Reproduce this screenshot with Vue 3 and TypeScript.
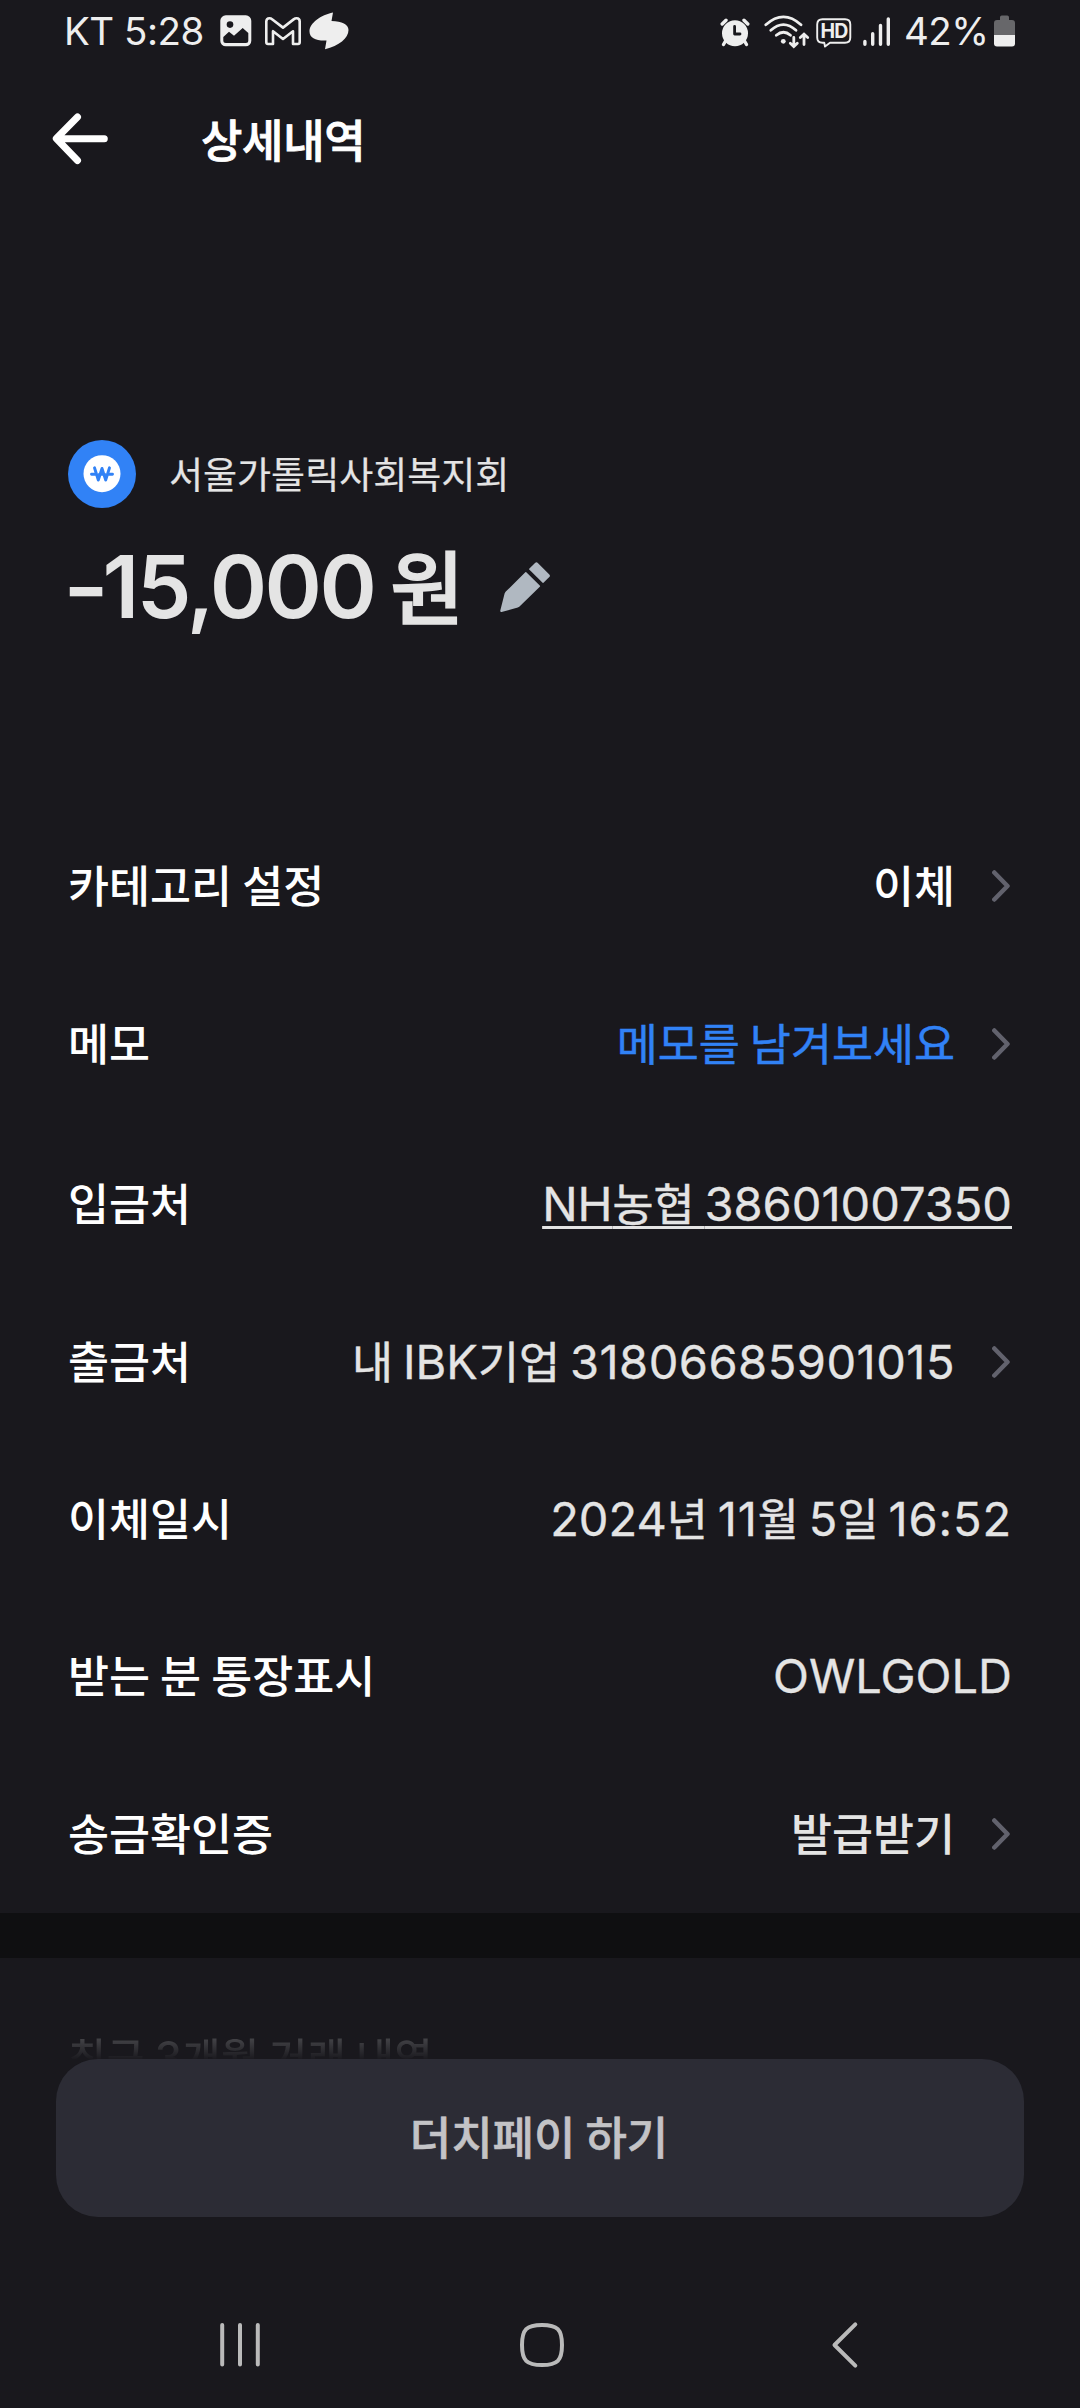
<script setup lang="ts">
interface Row {
  label: string
  value: string
  height: number
  tone?: 'strong' | 'link' | 'plain' | 'medium'
  tracking?: number
  underline?: boolean
  chevron?: boolean
}

interface Run {
  text: string
  latin: boolean
}

const rows: Row[] = [
  { label: '카테고리 설정', value: '이체', height: 158, tone: 'strong', chevron: true },
  { label: '메모', value: '메모를 남겨보세요', height: 160, tone: 'link', chevron: true },
  { label: '입금처', value: 'NH농협 38601007350', height: 158, underline: true },
  { label: '출금처', value: '내 IBK기업 31806685901015', height: 157, tracking: 0.5, chevron: true },
  { label: '이체일시', value: '2024년 11월 5일 16:52', height: 157, tracking: 0.9 },
  { label: '받는 분 통장표시', value: 'OWLGOLD', height: 158 },
  { label: '송금확인증', value: '발급받기', height: 158, tone: 'medium', chevron: true },
]

// Splits a string into Latin/digit runs and Hangul runs, so each gets its own face.
function runs(text: string): Run[] {
  return (text.match(/[\x21-\x7e]+|[^\x21-\x7e]+/g) ?? []).map((t) => ({
    text: t,
    latin: /^[\x21-\x7e]/.test(t),
  }))
}

function spacing(row: Row, run: Run): string {
  return run.text.includes('1') ? `${row.tracking ?? 0}px` : '0px'
}
</script>

<template>
  <div class="screen">
    <div class="status">
      <span class="status-text carrier">KT 5:28</span>
      <svg class="ic-photo" width="32" height="32" viewBox="0 0 32 32">
        <rect x="0.3" y="0.3" width="31" height="31" rx="5.5" fill="#eee" />
        <circle cx="10" cy="9.6" r="3.3" fill="#19181d" />
        <path d="M3.3 22 L9 16.7 L14 20.8 L22.7 13 L28.3 18 V25.5 Q28.3 28 25.8 28 H5.8 Q3.3 28 3.3 25.5 Z" fill="#19181d" />
      </svg>
      <svg class="ic-mail" width="36" height="29" viewBox="0 0 36 29">
        <path d="M1.3 4.5 Q1.3 1.3 4.4 1.3 Q6 1.3 7.4 2.4 L18 10.6 L28.6 2.4 Q30 1.3 31.6 1.3 Q34.7 1.3 34.7 4.5 V25.3 Q34.7 27 33 27 H28 V14.2 L18 22 L8 14.2 V27 H3 Q1.3 27 1.3 25.3 Z" fill="none" stroke="#eee" stroke-width="2.6" stroke-linejoin="round" />
      </svg>
      <svg class="ic-blob" width="40" height="38" viewBox="0 0 40 38">
        <path d="M24 0.5 C12 3 0.5 11 0.5 19.5 C0.5 26 7 29 17.5 28.5 L16 37.3 C30 34 39.5 26 39.5 18 C39.5 12.5 33 9 22.5 9 Z" fill="#eee" />
      </svg>
      <span class="grow"></span>
      <svg class="ic-alarm" width="30" height="29" viewBox="0 0 30 29">
        <g stroke="#eee" stroke-width="3.4" stroke-linecap="round" fill="none">
          <path d="M2.2 6 L6 2.3 M27.8 6 L24 2.3" />
          <path d="M5.5 23 L3.5 26.5 M24.5 23 L26.5 26.5" />
        </g>
        <circle cx="15" cy="15.3" r="13" fill="#eee" />
        <path d="M14.6 8.5 V16 H20" fill="none" stroke="#19181d" stroke-width="2.8" stroke-linecap="round" stroke-linejoin="round" />
      </svg>
      <svg class="ic-wifi" width="46" height="34" viewBox="0 0 46 34">
        <g fill="none" stroke="#eee" stroke-width="2.8" stroke-linecap="round">
          <path d="M1.8 9.8 Q19.5 -6 37 9.8" />
          <path d="M6.8 15.3 Q19.5 4 32 15.3" />
          <path d="M12.3 20.3 Q19.5 14.2 26.5 20.3" />
          <path d="M29.8 22.5 V31 M26.3 28.3 L29.8 31.6 L33.3 28.3" />
          <path d="M40 29.5 V19.5 M36.3 22.6 L40 19.1 L43.7 22.6" />
        </g>
        <circle cx="19.3" cy="26.3" r="2.4" fill="#eee" />
      </svg>
      <span class="hd">
        <svg width="36" height="30" viewBox="0 0 36 30">
          <path d="M6.5 1.2 H29 Q34.3 1.2 34.3 6.5 V19.5 Q34.3 24.8 29 24.8 H14 L9 28.6 L8.3 24.8 H6.5 Q1.2 24.8 1.2 19.5 V6.5 Q1.2 1.2 6.5 1.2 Z" fill="none" stroke="#eee" stroke-width="1.9" stroke-linejoin="round" />
        </svg>
        <b>HD</b>
      </span>
      <svg class="ic-signal" width="28" height="30" viewBox="0 0 28 30">
        <g stroke="#eee" stroke-width="3.4" stroke-linecap="round">
          <path d="M1.9 24.5 V27.3 M9.7 16.8 V27.3 M17.5 8.5 V27.3 M25.3 2 V27.3" />
        </g>
      </svg>
      <span class="status-text pct">42%</span>
      <svg class="ic-batt" width="21" height="32" viewBox="0 0 21 32">
        <path d="M6 5 V2.3 Q6 0.5 7.8 0.5 H13.2 Q15 0.5 15 2.3 V5 H18 Q21 5 21 8 V20 H0 V8 Q0 5 3 5 Z" fill="#67676a" />
        <path d="M0 20 H21 V28.5 Q21 31.5 18 31.5 H3 Q0 31.5 0 28.5 Z" fill="#eee" />
      </svg>
    </div>

    <header class="header">
      <svg width="56" height="52" viewBox="0 0 56 52" fill="none" stroke="#fff" stroke-width="7" stroke-linecap="round" stroke-linejoin="round">
        <path d="M25.5 4 L4.3 25.5 L25.5 47.5 M5 25.7 H52.3" />
      </svg>
      <h1>상세내역</h1>
    </header>

    <section class="summary">
      <div class="party">
        <svg width="68" height="68" viewBox="0 0 68 68">
          <circle cx="34" cy="34" r="34" fill="#3182f6" />
          <circle cx="34" cy="33.7" r="18.5" fill="#fff" />
          <path d="M26.5 27.8 L30.3 40 L34 28.5 L37.7 40 L41.5 27.8 M23.5 34.3 H28 M31.5 34.3 H36.5 M40 34.3 H44.5" fill="none" stroke="#3182f6" stroke-width="2.9" stroke-linecap="round" stroke-linejoin="round" />
        </svg>
        <span>서울가톨릭사회복지회</span>
      </div>
      <div class="amount">
        <span class="num"><i class="minus">-</i>15,000</span><span class="won">원</span>
        <svg width="51" height="51" viewBox="0 0 51 51" fill="#b0b8c1">
          <path d="M26.3 10.2 L40 23.8 Q40.3 24.3 39.8 24.7 L20.3 43.8 Q19.4 45 17.8 45.6 L1.6 50 Q0 50.2 0.3 48.6 L4.6 31.5 Q5 30.4 5.8 29.6 L25.3 10.2 Q25.8 9.8 26.3 10.2 Z" />
          <path d="M29.2 6.8 L35 0.9 Q36.5 -0.2 37.8 0.9 L49.3 12.4 Q50.6 13.8 49.3 15.1 L43.5 20.8 Q43 21.1 42.6 20.8 L29.2 7.6 Q28.9 7.2 29.2 6.8 Z" />
        </svg>
      </div>
    </section>

    <dl class="rows">
      <div v-for="row in rows" :key="row.label" class="row" :style="{ height: row.height + 'px' }">
        <dt>{{ row.label }}</dt>
        <dd :class="[row.tone ?? 'plain', { underline: row.underline }]">
          <span
            v-for="(run, i) in runs(row.value)"
            :key="i"
            :class="{ latin: run.latin }"
            :style="{ letterSpacing: spacing(row, run) }"
          >{{ run.text }}</span>
        </dd>
        <svg v-if="row.chevron" width="20" height="34" viewBox="0 0 20 34" fill="none" stroke="#62626d" stroke-width="4.5" stroke-linecap="round" stroke-linejoin="round">
          <path d="M2.3 3.5 L15.5 17 L2.3 30.5" />
        </svg>
      </div>
    </dl>

    <div class="divider"></div>

    <section class="recent">
      <h2><span v-for="(run, i) in runs('최근 3개월 거래 내역')" :key="i" :class="{ latin: run.latin }">{{ run.text }}</span></h2>
    </section>

    <button class="cta" type="button"><span>더치페이 하기</span></button>

    <nav class="nav">
      <svg width="40" height="46" viewBox="0 0 40 46" stroke="#bababa" stroke-width="4" stroke-linecap="round">
        <path d="M2.2 3 V42.6 M20 3 V42.6 M37.8 3 V42.6" />
      </svg>
      <svg class="home" width="46" height="46" viewBox="0 0 46 46" fill="none" stroke="#bababa" stroke-width="4">
        <path d="M23 3 C38.5 3 43 7.5 43 23 C43 38.5 38.5 43 23 43 C7.5 43 3 38.5 3 23 C3 7.5 7.5 3 23 3 Z" />
      </svg>
      <svg class="back" width="28" height="48" viewBox="0 0 28 48" fill="none" stroke="#bababa" stroke-width="4" stroke-linecap="round" stroke-linejoin="round">
        <path d="M24.3 3.3 L3.5 24 L24.3 44.7" />
      </svg>
    </nav>
  </div>
</template>

<style>
html,
body {
  background: #19181d;
}
</style>

<style scoped>
.screen {
  width: 1080px;
  height: 2408px;
  overflow: hidden;
  display: flex;
  flex-direction: column;
  background: #19181d;
  color: #fff;
  font-family: 'Noto Sans CJK KR', 'Noto Sans', sans-serif;
}
.screen * {
  box-sizing: border-box;
}
svg {
  display: block;
  flex: none;
}
.status {
  height: 62px;
  flex: none;
  display: flex;
  align-items: center;
  padding: 0 65px 0 64px;
}
.status-text {
  font-family: Inter, sans-serif;
  font-weight: 380;
  font-size: 38.5px;
  line-height: 62px;
  letter-spacing: -0.5px;
  color: #eee;
  white-space: pre;
}
.carrier {
  width: 156px;
}
.ic-mail {
  margin-left: 13px;
}
.ic-blob {
  margin-left: 8px;
}
.grow {
  flex: 1;
}
.ic-alarm {
  margin-top: 2px;
}
.ic-wifi {
  margin: 1px 0 0 14px;
}
.hd {
  position: relative;
  margin: 3px 0 0 6px;
}
.hd b {
  position: absolute;
  left: 0;
  top: 0;
  width: 36px;
  text-align: center;
  font: 700 19.5px/26px Inter, sans-serif;
  letter-spacing: -0.8px;
  color: #eee;
}
.ic-signal {
  margin: 1px 0 0 11px;
}
.pct {
  width: 96px;
  padding-left: 13px;
}
.ic-batt {
  margin-left: 7px;
}
.header {
  height: 154px;
  flex: none;
  display: flex;
  align-items: center;
  padding: 0 52px;
}
.header h1 {
  margin: 0 0 0 93px;
  font-size: 45px;
  font-weight: 500;
  -webkit-text-stroke: 0.8px #fff;
  line-height: 60px;
  letter-spacing: -0.3px;
}
.summary {
  height: 591px;
  flex: none;
  padding: 224px 68px 0;
  color: #e4e4e4;
}
.party {
  display: flex;
  align-items: center;
  gap: 33px;
  height: 68px;
  font-size: 37px;
  -webkit-text-stroke: 0.2px #e4e4e4;
}
.party span {
  line-height: 60px;
  margin-bottom: 3px;
}
.amount {
  display: flex;
  align-items: baseline;
  height: 110px;
  margin-top: 20px;
  line-height: 110px;
}
.num {
  font-family: Inter, sans-serif;
  font-weight: 600;
  font-size: 87px;
  letter-spacing: -2.5px;
}
.minus {
  display: inline-block;
  font-style: normal;
  margin: 0 2px 0 -5.5px;
  transform: scaleX(1.14);
  transform-origin: left center;
}
.won {
  font-size: 80px;
  font-weight: 500;
  -webkit-text-stroke: 1.6px #e4e4e4;
  margin-left: 16px;
}
.amount svg {
  margin: 8px 0 0 36px;
  align-self: center;
}
.rows {
  margin: 0;
  flex: none;
}
.row {
  display: flex;
  align-items: baseline;
  padding: 47px 68px 0;
}
dt {
  font-size: 44.6px;
  font-weight: 500;
  line-height: 60px;
  flex: 1;
}
dd {
  margin: 0;
  font-size: 44.6px;
  line-height: 60px;
  white-space: nowrap;
  color: #e4e4e4;
  -webkit-text-stroke: 0.5px currentColor;
}
dd span,
h2 span {
  white-space: pre;
}
.latin {
  font-family: Inter, sans-serif;
  font-size: 47px;
  -webkit-text-stroke: 0.3px currentColor;
}
.strong {
  color: #fff;
  font-weight: 500;
  -webkit-text-stroke: 0;
}
.medium {
  font-weight: 500;
  -webkit-text-stroke: 0;
}
.link {
  color: #3182f6;
}
.underline {
  text-decoration: underline;
  text-decoration-thickness: 3px;
  text-underline-offset: 5px;
  text-decoration-skip-ink: none;
}
.row svg {
  margin: 0 0 0 37px;
}
.divider {
  height: 45px;
  flex: none;
  background: #0f0f11;
}
.recent {
  height: 101px;
  flex: none;
  overflow: hidden;
  padding: 67px 68px 0;
}
.recent h2 {
  margin: 0;
  font-size: 41.3px;
  font-weight: 500;
  line-height: 60px;
  letter-spacing: 0.5px;
  white-space: nowrap;
  color: transparent;
  background: linear-gradient(#4a4a4e 10px, #1b1a1f 34px);
  background-clip: text;
  -webkit-background-clip: text;
}
.recent .latin {
  font-size: 43.5px;
  -webkit-text-stroke: 0;
}
.cta {
  height: 158px;
  flex: none;
  margin: 0 56px;
  padding: 0 2px 6px 0;
  border: 0;
  border-radius: 42px;
  background: #2c2c35;
  color: #c3c3c6;
  font-family: inherit;
  font-size: 45px;
  font-weight: 500;
  -webkit-text-stroke: 0.6px #c3c3c6;
}
.nav {
  height: 191px;
  flex: none;
  display: flex;
  align-items: center;
  padding: 65px 0 0 220px;
}
.home {
  margin-left: 259px;
}
.back {
  margin-left: 266px;
}
</style>
